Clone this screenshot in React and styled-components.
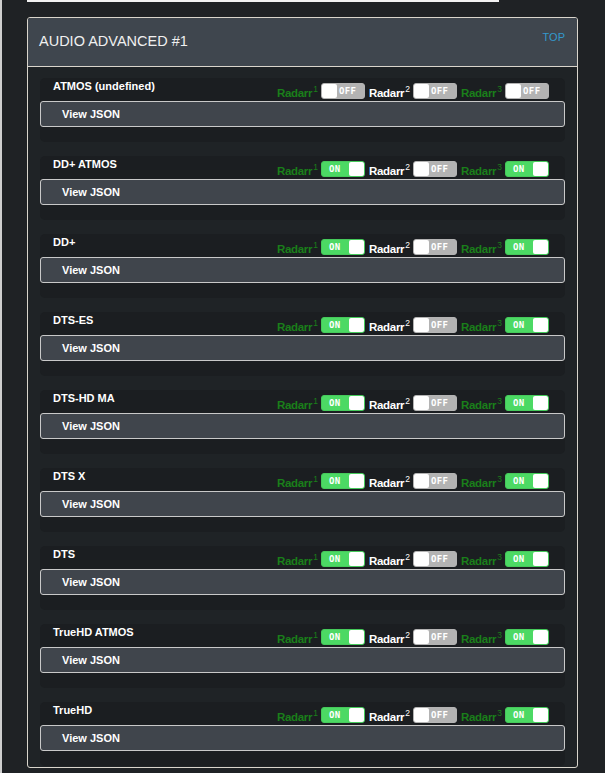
import React from "react"
import styled, { createGlobalStyle } from "styled-components"

const GlobalStyle = createGlobalStyle`
  body {
    margin: 0;
    background: #1f2225;
    font-family: "Liberation Sans", Arial, sans-serif;
  }
`

const ITEMS = [
  { name: "ATMOS (undefined)", states: [false, false, false] },
  { name: "DD+ ATMOS", states: [true, false, true] },
  { name: "DD+", states: [true, false, true] },
  { name: "DTS-ES", states: [true, false, true] },
  { name: "DTS-HD MA", states: [true, false, true] },
  { name: "DTS X", states: [true, false, true] },
  { name: "DTS", states: [true, false, true] },
  { name: "TrueHD ATMOS", states: [true, false, true] },
  { name: "TrueHD", states: [true, false, true] },
]

const PageStyl = styled.div`
  min-height: 773px;
  border-left: 2px solid #cfcfcf;
  padding: 0 27px 0 25px;
  box-sizing: border-box;
`

const TopRuleStyl = styled.div`
  width: 472px;
  height: 2px;
  background: #f2f2f2;
`

const CardStyl = styled.div`
  margin-top: 15px;
  border: 1px solid #d9d5cc;
  border-radius: 3px;
  overflow: hidden;
  background: #1f2326;
`

const CardHeaderStyl = styled.div`
  position: relative;
  height: 48px;
  display: flex;
  align-items: center;
  padding: 0 12px 0 11px;
  background: #3f464e;
  border-bottom: 1px solid #d9d5cc;
`

const TitleStyl = styled.div`
  color: #f0f0f0;
  font-size: 14.5px;
  line-height: 16px;
  margin-top: -2px;
  text-transform: uppercase;
`

const TopLinkStyl = styled.a`
  position: absolute;
  top: 13px;
  right: 12px;
  color: #3399cc;
  font-size: 11px;
  text-decoration: none;
`

const CardBodyStyl = styled.div`
  display: flex;
  flex-direction: column;
  gap: 14px;
  padding: 11px 12px 1px;
`

const BlockStyl = styled.div`
  background: #1b1e21;
  border-radius: 5px;
  padding-bottom: 15px;
`

const BlockHeadStyl = styled.div`
  height: 23px;
  display: flex;
  justify-content: space-between;
  align-items: flex-end;
`

const NameStyl = styled.div`
  align-self: flex-start;
  margin: 2px 0 0 13px;
  color: #fff;
  font-size: 11px;
  font-weight: bold;
  line-height: 13px;
`

const SwitchesStyl = styled.div`
  display: flex;
  align-items: flex-end;
  margin-right: 16px;
  padding-bottom: 2px;
`

const LabelStyl = styled.span`
  color: ${p => (p.$white ? "#ffffff" : "#1a7f1a")};
  font-size: 11.5px;
  font-weight: bold;
  line-height: 12px;
  letter-spacing: -0.3px;
  margin-right: 3px;
  sup {
    font-size: 8.5px;
    line-height: 0;
    vertical-align: 5px;
    font-weight: normal;
    letter-spacing: 0;
    margin-left: 1px;
  }
`

const ToggleStyl = styled.div`
  width: 44px;
  height: 16px;
  box-sizing: border-box;
  border-radius: 3px;
  border: 1px solid ${p => (p.$on ? "#45c95a" : "#b3b3b3")};
  background: ${p => (p.$on ? "#4cd964" : "#b3b3b3")};
  display: flex;
  flex-direction: ${p => (p.$on ? "row" : "row-reverse")};
  align-items: center;
  margin-right: 4px;
  &:last-child {
    margin-right: 0;
  }
`

const ToggleTextStyl = styled.span`
  flex: 1;
  padding-left: ${p => (p.$on ? "7px" : "2px")};
  color: #fff;
  font-family: "DejaVu Sans Mono", monospace;
  font-weight: bold;
  font-size: 9px;
  letter-spacing: 0.4px;
  line-height: 14px;
`

const KnobStyl = styled.span`
  width: 15px;
  height: 14px;
  background: #fff;
  border-radius: 2px;
`

const JsonButtonStyl = styled.div`
  height: 24px;
  display: flex;
  align-items: center;
  padding-left: 21px;
  background: #40454c;
  border: 1px solid #c9c9c9;
  border-radius: 3px;
  color: #fff;
  font-size: 11px;
  font-weight: bold;
`

const Toggle = ({ on }) =>
  <ToggleStyl $on={on}>
    <ToggleTextStyl $on={on}>{on ? "ON" : "OFF"}</ToggleTextStyl>
    <KnobStyl />
  </ToggleStyl>

const Block = ({ name, states }) =>
  <BlockStyl>
    <BlockHeadStyl>
      <NameStyl>{name}</NameStyl>
      <SwitchesStyl>
        {states.map((on, i) =>
          <React.Fragment key={i}>
            <LabelStyl $white={i === 1}>Radarr<sup>{i + 1}</sup></LabelStyl>
            <Toggle on={on} />
          </React.Fragment>
        )}
      </SwitchesStyl>
    </BlockHeadStyl>
    <JsonButtonStyl>View JSON</JsonButtonStyl>
  </BlockStyl>

const App = () =>
  <PageStyl>
    <GlobalStyle />
    <TopRuleStyl />
    <CardStyl>
      <CardHeaderStyl>
        <TitleStyl>Audio Advanced #1</TitleStyl>
        <TopLinkStyl href="#">TOP</TopLinkStyl>
      </CardHeaderStyl>
      <CardBodyStyl>
        {ITEMS.map(item => <Block key={item.name} {...item} />)}
      </CardBodyStyl>
    </CardStyl>
  </PageStyl>

export default App
